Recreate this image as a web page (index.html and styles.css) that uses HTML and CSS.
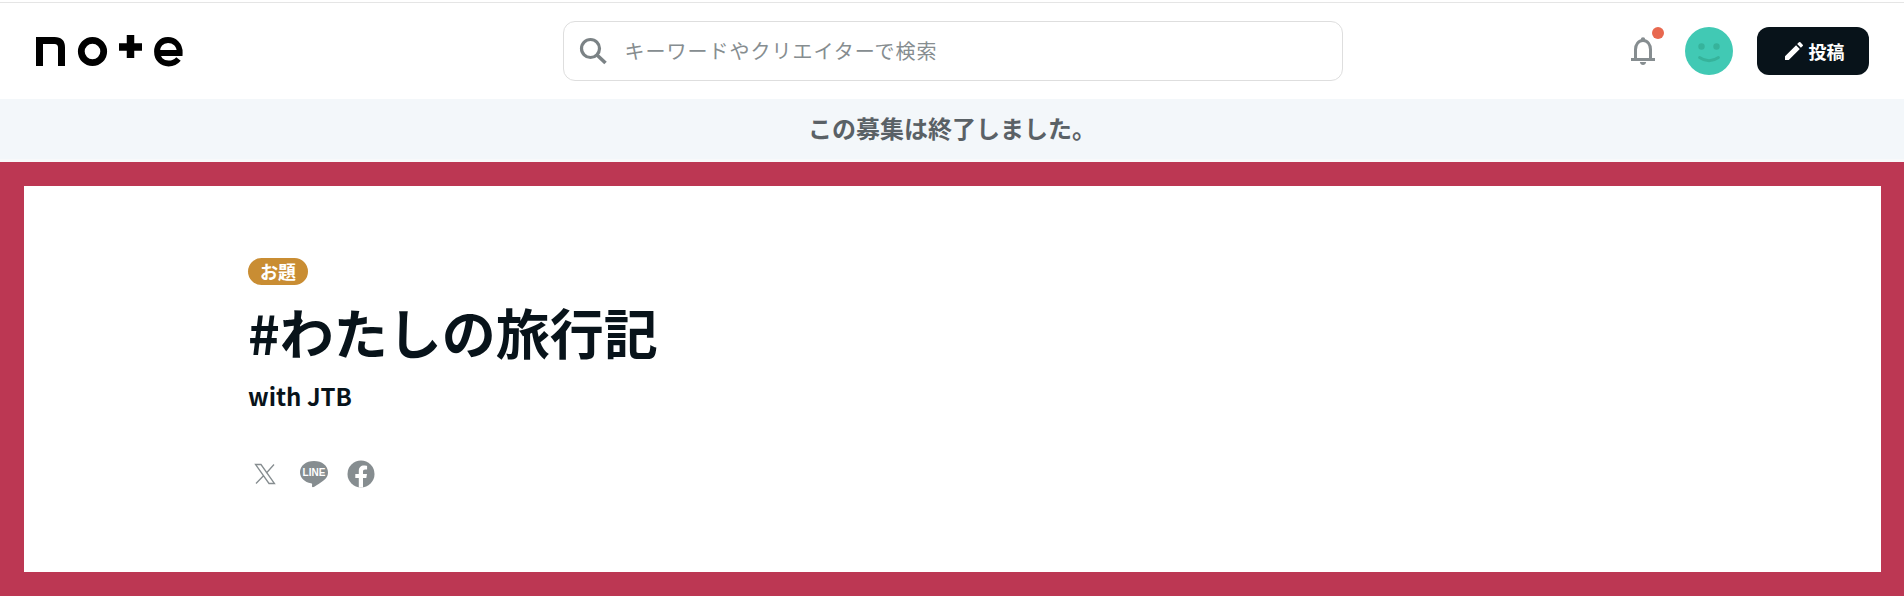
FILE: index.html
```html
<!DOCTYPE html>
<html lang="ja">
<head>
<meta charset="utf-8">
<title>#わたしの旅行記 with JTB</title>
<link rel="stylesheet" href="styles.css">
</head>
<body>
<header class="header">
  <a class="logo" aria-label="note">
    <svg width="148" height="34" viewBox="0 0 148 34">
      <path d="M3.500 32V6.500H18.500Q25.500 6.500 25.500 13.500V32" fill="none" stroke="#000" stroke-width="7"/>
      <circle cx="56.500" cy="17.500" r="11.200" fill="none" stroke="#000" stroke-width="6.800"/>
      <path d="M83 13H106M94.500 1V24" fill="none" stroke="#000" stroke-width="7.500"/>
      <path d="M121 19H143.700C144 10.500 138 6 132 6C125 6 121 11.500 121 17.500C121 25 126 29.500 132.500 29.500C137 29.500 140 28 142.500 25" fill="none" stroke="#000" stroke-width="5.800"/>
    </svg>
  </a>
  <div class="search">
    <svg class="search-icon" width="28" height="28" viewBox="0 0 28 28">
      <circle cx="11.500" cy="11.500" r="9" fill="none" stroke="#7b8285" stroke-width="3.200"/>
      <path d="M18 18L26.500 26" fill="none" stroke="#7b8285" stroke-width="3.600"/>
    </svg>
    <span class="placeholder">キーワードやクリエイターで検索</span>
  </div>
  <div class="actions">
    <div class="bell">
      <svg width="26" height="30" viewBox="0 0 26 30">
        <path d="M1 23.500H25M5.500 23V13.500C5.500 8.500 8.500 4.500 13 4.500C17.500 4.500 20.500 8.500 20.500 13.500V23" fill="none" stroke="#868d90" stroke-width="3"/>
        <circle cx="13" cy="3.500" r="2.200" fill="#868d90"/>
        <path d="M9.800 26H16.200Q15.500 29 13 29Q10.500 29 9.800 26Z" fill="#868d90"/>
      </svg>
      <span class="dot"></span>
    </div>
    <div class="avatar">
      <svg width="48" height="48" viewBox="0 0 48 48">
        <circle cx="16.500" cy="19.500" r="3.200" fill="#36b39b"/>
        <circle cx="31.500" cy="19.500" r="3.200" fill="#36b39b"/>
        <path d="M14.500 30.500Q24 37 33.500 30.500" fill="none" stroke="#36b39b" stroke-width="2.800" stroke-linecap="round"/>
      </svg>
    </div>
    <a class="post">
      <svg width="24" height="24" viewBox="0 0 24 24"><path fill="#fff" d="M3 17.250V21h3.750L17.810 9.940l-3.750-3.750L3 17.250zM20.710 7.040a1 1 0 0 0 0-1.410l-2.340-2.340a1 1 0 0 0-1.410 0l-1.830 1.830 3.750 3.750 1.830-1.830z"/></svg>
      <span>投稿</span>
    </a>
  </div>
</header>
<div class="notice">この募集は終了しました。</div>
<main class="frame">
  <section class="panel">
    <span class="badge">お題</span>
    <h1 class="title">#わたしの旅行記</h1>
    <p class="sub">with JTB</p>
    <div class="share">
      <svg width="24" height="24" viewBox="0 0 24 24"><path fill="none" stroke="#868d90" stroke-width="1.300" d="M2.500 2.500H8L21.500 21.500H16ZM21 2.500L13.200 11.300M10.500 13.800L3 21.500"/></svg>
      <svg class="line" width="30" height="28" viewBox="0 0 30 28">
        <path fill="#868d90" d="M15 1C7 1 1 5.800 1 12.300C1 18 5.700 22.300 12 23.300C13.200 23.600 13.300 24.300 13 26C12.800 27.300 14 27.500 15.300 26.700C18 25 25 20.800 27.300 17.800C28.500 16.300 29 14.400 29 12.300C29 5.800 23 1 15 1Z"/>
        <text class="line-text" x="15" y="16" text-anchor="middle">LINE</text>
      </svg>
      <svg width="28" height="28" viewBox="0 0 28 28">
        <circle cx="14" cy="14" r="13.500" fill="#868d90"/>
        <path fill="#fff" d="M19.300 18L20 14H16V11.500C16 10.300 16.600 9.400 18.300 9.400H20.100V5.900C20.100 5.900 18.500 5.600 17 5.600C13.800 5.600 11.800 7.500 11.800 11V14H8.300V18H11.800V27.400C12.500 27.500 13.300 27.600 14 27.600C14.700 27.600 15.300 27.500 16 27.400V18Z"/>
      </svg>
    </div>
  </section>
</main>
</body>
</html>
```

FILE: styles.css
```css
* { box-sizing: border-box; }
html, body { margin: 0; padding: 0; background: #fff; }
body {
  font-family: "Noto Sans CJK JP", "Noto Sans", sans-serif;
  color: #08131a;
  height: 602px;
  overflow: hidden;
}
.header {
  height: 97px;
  margin-top: 2px;
  border-top: 1px solid #e5e5e5;
  padding: 0 35px 0 36px;
  display: grid;
  grid-template-columns: 1fr 780px 1fr;
  align-items: center;
}
.logo { display: block; line-height: 0; }
.search {
  height: 60px;
  border: 1px solid #dedede;
  border-radius: 12px;
  display: flex;
  align-items: center;
  padding-left: 15px;
  gap: 18px;
}
.placeholder { font-size: 20px; color: #868d90; letter-spacing: 0.05em; padding-bottom: 2px; }
.actions { display: flex; align-items: center; justify-content: flex-end; }
.bell { position: relative; line-height: 0; margin-right: 29px; }
.dot {
  position: absolute;
  top: -9px;
  right: -8px;
  width: 12px;
  height: 12px;
  border-radius: 50%;
  background: #e8684f;
}
.avatar { width: 48px; height: 48px; border-radius: 50%; background: #41c9b4; line-height: 0; margin-right: 24px; }
.post {
  width: 112px;
  height: 48px;
  border-radius: 12px;
  background: #08131a;
  color: #fff;
  font-size: 18px;
  font-weight: 700;
  display: flex;
  align-items: center;
  justify-content: center;
  gap: 3px;
}
.notice {
  height: 63px;
  background: #f3f7fa;
  color: #5a6166;
  font-size: 24px;
  font-weight: 700;
  display: flex;
  align-items: center;
  justify-content: center;
  padding-bottom: 3px;
  border-bottom: 3px solid #f8f9fa;
}
.frame { height: 434px; background: #bc3753; padding: 24px 23px 24px 24px; }
.panel { height: 386px; background: #fff; padding: 72px 0 0 224px; }
.badge {
  display: block;
  width: 60px;
  height: 27px;
  border-radius: 14px;
  background: #c98d33;
  color: #fff;
  font-size: 18px;
  font-weight: 700;
  line-height: 27px;
  text-align: center;
}
.title { margin: 11px 0 0; font-size: 54px; line-height: 72px; font-weight: 700; }
.sub { margin: 10px 0 0; font-size: 24px; line-height: 36px; font-weight: 700; }
.share { margin-top: 46px; display: flex; align-items: center; gap: 20px; padding-left: 5px; }
.line { margin-left: 2px; margin-right: -2px; }
.line-text { font-family: "Liberation Sans", sans-serif; font-size: 10px; font-weight: 700; fill: #fff; }
```
